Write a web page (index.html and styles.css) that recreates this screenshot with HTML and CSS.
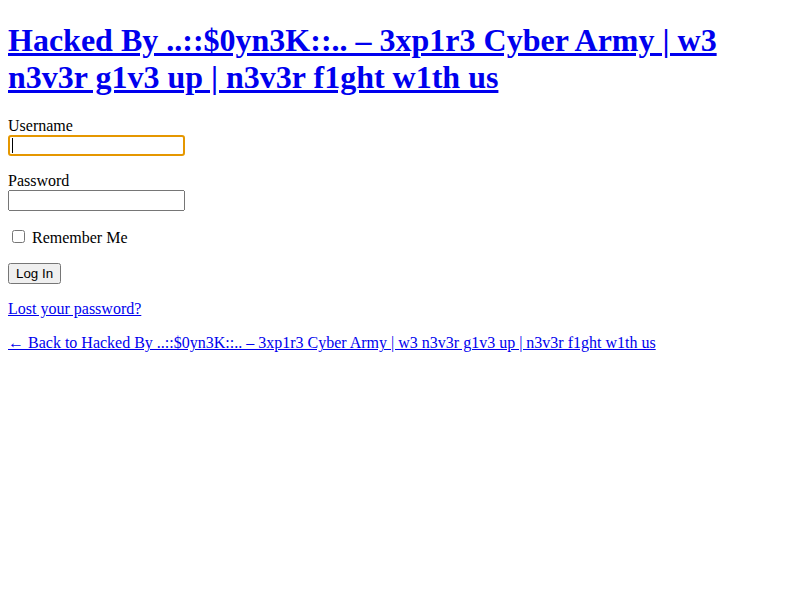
FILE: index.html
```html
<!DOCTYPE html>
<html lang="en">
<head>
<meta charset="utf-8">
<title>Log In</title>
<link rel="stylesheet" href="styles.css">
</head>
<body class="login">
<h1 class="site-title"><a href="#">Hacked By ..::$0yn3K::.. – 3xp1r3 Cyber Army | w3 n3v3r g1v3 up | n3v3r f1ght w1th us</a></h1>
<form class="login-form">
<p><label for="user_login">Username</label><br><span class="field-wrap"><input type="text" id="user_login" class="input input-focused" size="20"><span class="caret"></span></span></p>
<p><label for="user_pass">Password</label><br><input type="password" id="user_pass" class="input" size="20"></p>
<p class="forgetmenot"><input type="checkbox" id="rememberme" class="check"> <label for="rememberme">Remember Me</label></p>
<p class="submit"><input type="submit" class="button" value="Log In"></p>
</form>
<p class="nav"><a href="#">Lost your password?</a></p>
<p class="backtoblog"><a href="#">← Back to Hacked By ..::$0yn3K::.. – 3xp1r3 Cyber Army | w3 n3v3r g1v3 up | n3v3r f1ght w1th us</a></p>
</body>
</html>
```
FILE: styles.css
```css
body.login {
  margin: 8px;
  font-family: "Liberation Serif", "Times New Roman", serif;
  font-size: 16px;
  color: #000;
  background: #fff;
}
a { color: #0000ee; }
.site-title {
  font-size: 32px;
  font-weight: bold;
  margin: 14px 0 21.44px;
}
.input {
  font-family: "Liberation Sans", Arial, sans-serif;
  font-size: 13.333px;
  width: 177px;
  height: 21px;
  box-sizing: border-box;
  margin: 0;
}
.field-wrap {
  position: relative;
  display: inline-block;
  vertical-align: top;
}
.input-focused {
  border: 2px solid #e59700;
  border-radius: 3px;
  outline: none;
}
.caret {
  position: absolute;
  left: 4px;
  top: 3px;
  width: 1px;
  height: 15px;
  background: #000;
}
.button {
  font-family: "Liberation Sans", Arial, sans-serif;
  font-size: 13.333px;
}
```
